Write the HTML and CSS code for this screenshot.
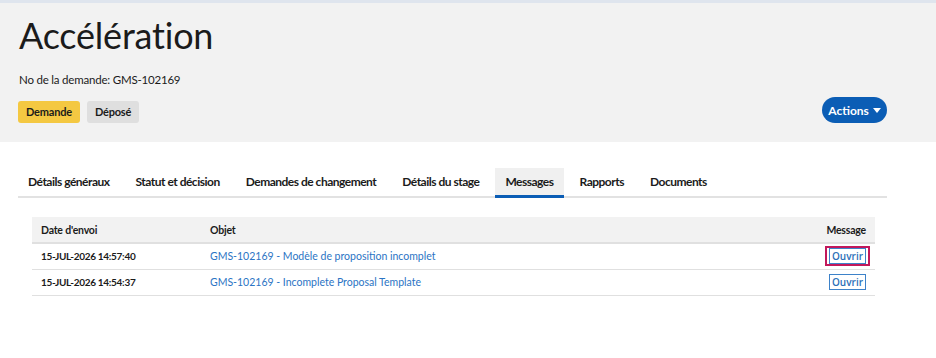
FILE: index.html
```html
<!doctype html>
<html lang="fr">
  <head>
    <meta charset="UTF-8">
    <title>Accélération</title>
    <link rel="stylesheet" href="styles.css">
  </head>
  <body>
    <div class="page-header">
      <div class="header-main">
        <h1>Accélération</h1>
        <p class="request-no">No de la demande: GMS-102169</p>
        <div class="badges">
          <span class="badge badge-yellow">Demande</span>
          <span class="badge badge-grey">Déposé</span>
        </div>
      </div>
      <button class="actions-button">Actions <span class="caret"></span></button>
    </div>

    <ul class="tabs">
      <li class="tab">Détails généraux</li>
      <li class="tab">Statut et décision</li>
      <li class="tab">Demandes de changement</li>
      <li class="tab">Détails du stage</li>
      <li class="tab active">Messages</li>
      <li class="tab">Rapports</li>
      <li class="tab">Documents</li>
    </ul>

    <table class="messages">
      <thead>
        <tr>
          <th class="col-date">Date d'envoi</th>
          <th>Objet</th>
          <th class="col-action">Message</th>
        </tr>
      </thead>
      <tbody>
        <tr>
          <td class="date">15-JUL-2026 14:57:40</td>
          <td><a href="#">GMS-102169 - Modèle de proposition incomplet</a></td>
          <td class="col-action"><span class="highlight"><button class="open-button">Ouvrir</button></span></td>
        </tr>
        <tr>
          <td class="date">15-JUL-2026 14:54:37</td>
          <td><a href="#">GMS-102169 - Incomplete Proposal Template</a></td>
          <td class="col-action"><button class="open-button">Ouvrir</button></td>
        </tr>
      </tbody>
    </table>
  </body>
</html>
```

FILE: styles.css
```css
* {
  margin: 0;
  padding: 0;
  box-sizing: border-box;
}

body {
  font-family: Lato, "Noto Sans", sans-serif;
  color: #1b1b1b;
  background: #ffffff;
}

.page-header {
  display: flex;
  justify-content: space-between;
  align-items: flex-end;
  background: #f2f2f2;
  border-top: 3px solid #dfe5ee;
  padding: 11px 49px 19px 19px;
}

h1 {
  font-size: 36px;
  font-weight: 400;
  line-height: 42px;
  letter-spacing: -0.2px;
  color: #1b1b1b;
}

.request-no {
  font-size: 11.5px;
  letter-spacing: -0.2px;
  margin-top: 15px;
  line-height: 18px;
}

.badges {
  display: flex;
  gap: 7px;
  margin-top: 12px;
  margin-left: -1px;
}

.badge {
  display: inline-block;
  font-size: 11px;
  font-weight: 700;
  letter-spacing: -0.2px;
  line-height: 22px;
  padding: 0 8px;
  border-radius: 3px;
}

.badge-yellow {
  background: #f4c842;
}

.badge-grey {
  background: #dfdfdf;
}

.actions-button {
  font-family: Lato, sans-serif;
  font-size: 12px;
  font-weight: 700;
  color: #ffffff;
  background: #0b5db5;
  border: none;
  border-radius: 13px;
  height: 26px;
  width: 65px;
  cursor: pointer;
}

.caret {
  display: inline-block;
  width: 0;
  height: 0;
  border-left: 4px solid transparent;
  border-right: 4px solid transparent;
  border-top: 5px solid #ffffff;
  vertical-align: 2px;
  margin-left: 1px;
}

.tabs {
  display: flex;
  list-style: none;
  margin: 26px 49px 0 18px;
  border-bottom: 2px solid #e2e2e2;
  gap: 6px;
}

.tab {
  font-size: 12px;
  font-weight: 700;
  letter-spacing: -0.5px;
  padding: 5px 10px 4px;
  line-height: 18px;
  border-bottom: 3px solid transparent;
  margin-bottom: -2px;
}

.tab.active {
  background: #f0f0f0;
  border-bottom-color: #0b5db5;
}

.messages {
  margin: 19px 61px 0 32px;
  width: calc(100% - 93px);
  border-collapse: collapse;
  font-size: 10.5px;
}

.messages th {
  background: #f2f2f2;
  text-align: left;
  font-size: 10.5px;
  font-weight: 700;
  letter-spacing: -0.2px;
  height: 26px;
  padding: 0 9px;
  border-bottom: 2px solid #e0e0e0;
}

.messages th.col-date {
  width: 169px;
}

.messages td {
  height: 26px;
  padding: 0 9px;
  border-bottom: 1px solid #e0e0e0;
}

.messages .col-action {
  text-align: right;
}

.date {
  font-size: 10px;
  font-weight: 700;
  letter-spacing: -0.3px;
}

.messages a {
  font-size: 10.5px;
  color: #2b74c4;
  text-decoration: none;
}

.open-button {
  font-family: "Open Sans", sans-serif;
  font-size: 10px;
  font-weight: 600;
  color: #2b6fb8;
  background: #ffffff;
  border: 1px solid #3d82c9;
  width: 37px;
  height: 16px;
  line-height: 14px;
  cursor: pointer;
}

.highlight {
  display: inline-block;
  border: 2px solid #c2185b;
  padding: 0 2px;
  margin-right: -4px;
  line-height: 0;
}
```
